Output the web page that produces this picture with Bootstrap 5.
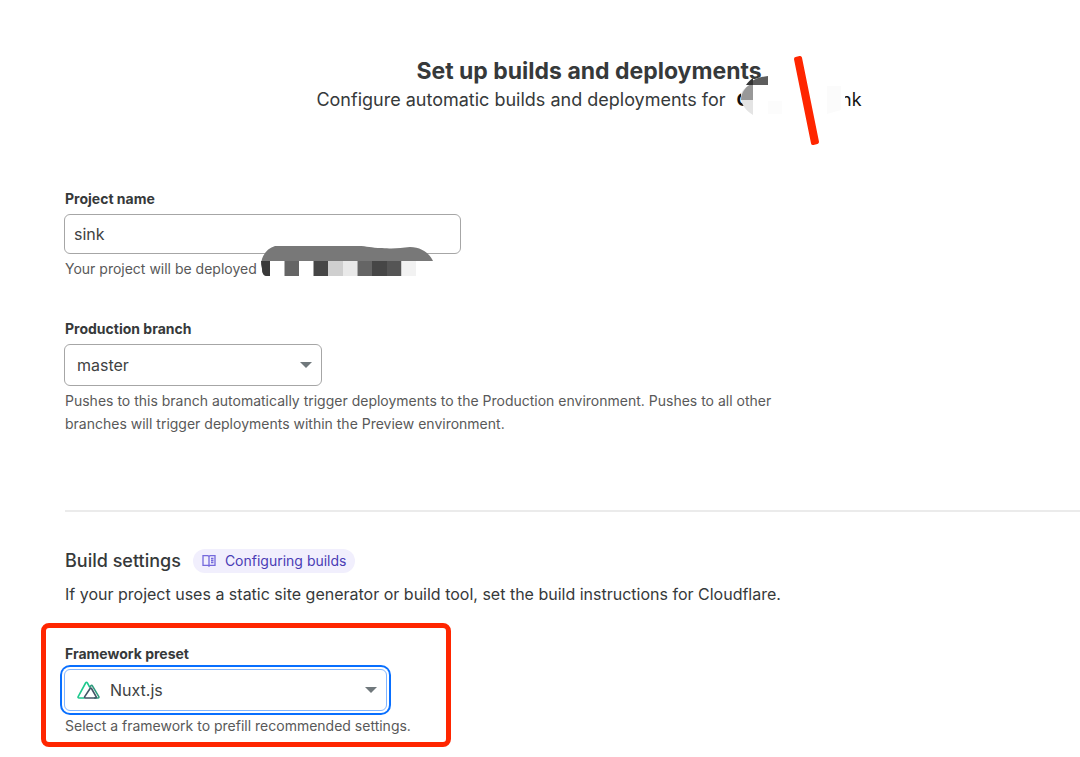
<!DOCTYPE html>
<html lang="en">
<head>
<meta charset="utf-8">
<meta name="viewport" content="width=device-width, initial-scale=1">
<title>Set up builds and deployments</title>
<link href="https://cdn.jsdelivr.net/npm/bootstrap@5.3.0/dist/css/bootstrap.min.css" rel="stylesheet">
<style>
  body { font-family: Inter, "Liberation Sans", sans-serif; font-size: 16px; line-height: 24px; color: #36393a; background: #fff; }
  .setup { padding: 55px 0 19px 65px; }
  .setup-head { padding-left: 33px; margin-bottom: 75px; }
  .setup-title { font-size: 23px; line-height: 32px; font-weight: 700; }
  .setup-sub { font-size: 18px; line-height: 26px; gap: 11px; }
  .repo { width: 125px; color: #111; }
  .repo-mask { left: -1px; top: -33px; }
  .field-group { margin-bottom: 38px; }
  .field-label { font-size: 14px; line-height: 22px; font-weight: 700; }
  .field-help { font-size: 14px; line-height: 23px; color: #595959; max-width: 740px; margin-top: 3px; }
  .field-box { border: 1px solid #a6a6a6; border-radius: 6px; color: #404242; font-size: 16px; line-height: 24px; margin-left: -1px; }
  .field-name { width: 397px; height: 40px; padding: 0 9px; }
  .field-branch { width: 258px; }
  .field-select { height: 42px; padding: 0 40px 0 12px; background: #fff url("data:image/svg+xml,%3Csvg xmlns='http://www.w3.org/2000/svg' viewBox='0 0 12 6'%3E%3Cpath d='M0 0h12L6 6z' fill='%2370787c'/%3E%3C/svg%3E") no-repeat right 9px center / 12px 6px; }
  .field-preset { width: 323px; padding-left: 45px; border-color: #82b6ff; }
  .field-preset, .field-preset:focus { box-shadow: 0 0 0 2px #fff, 0 0 0 4px #086fff; }
  .preset-icon { left: 12px; top: 12px; }
  .name-mask { left: 195px; top: 56px; }
  .divider { border-top: 2px solid #ebebeb; margin: 75px 0 35px; }
  .section-title { font-size: 18px; line-height: 28px; font-weight: 500; }
  .section-head { gap: 12px; margin-bottom: 7px; }
  .section-text { margin-bottom: 37px; }
  .doc-link { font-size: 14px; line-height: 24px; color: #4a3cb5; background: #f1effd; padding: 0 9px; gap: 9px; }
  .callout { left: -24px; top: -20px; width: 410px; height: 124px; border: 5px solid #ff2600; border-radius: 8px; }
</style>
</head>
<body>
<main class="setup">
  <header class="setup-head text-center">
    <h1 class="setup-title mb-0">Set up builds and deployments</h1>
    <p class="setup-sub d-flex justify-content-center mb-0">
      <span>Configure automatic builds and deployments for</span>
      <span class="repo position-relative d-flex justify-content-between"><b>C</b><span>nk</span>
        <svg class="repo-mask position-absolute" width="125" height="92" viewBox="736 54 125 92" aria-hidden="true">
          <path d="M768 76v36h-14C748 110 741 103 741 94C742 86 750 78 768 76z" fill="#fff"/>
          <path d="M753 85v30C746 111 741 104 741 98L741 94C742 90 746 86 753 85z" fill="#e4e4e4"/>
          <path d="M753 83v17H741C741 92 746 86 753 83z" fill="#989898"/>
          <path d="M768 76v9H748C753 79 760 77 768 76z" fill="#5d5d5d"/>
          <path d="M753 78v7H746C748 82 750 80 753 78z" fill="#343434"/>
          <path d="M768 101h14v13h-14z" fill="#fcfcfc"/>
          <path d="M827 86h14v24l-14 4z" fill="#fbfbfb"/>
          <path d="M841 88h4v22h-4z" fill="#fff"/>
          <path d="M796 59L800 58L817 142L813 143z" fill="#ff2600" stroke="#ff2600" stroke-width="4" stroke-linejoin="round"/>
        </svg>
      </span>
    </p>
  </header>

  <form>
    <div class="field-group position-relative">
      <label class="field-label d-block mb-1" for="project">Project name</label>
      <input class="field-box field-name d-block" id="project" type="text" value="sink">
      <div class="field-help">Your project will be deployed</div>
      <svg class="name-mask position-absolute" width="176" height="34" viewBox="260 244 176 34" aria-hidden="true">
        <path d="M261 261h157v15H266q-5-2-5-8z" fill="#fff"/>
        <path d="M261 264C262 254 268 248 275 246H358C368 246 370 248 382 248C394 249 400 248 410 247C422 247 430 254 433 261H270V276H266Q262 275 262 268z" fill="#787878"/>
        <path d="M261 261h9v15h-4q-4-1-4-7z" fill="#393939"/>
        <path d="M284.500 261h14.500v15h-14.500z" fill="#656565"/>
        <path d="M313.500 261h14.500v15h-14.500z" fill="#464646"/>
        <path d="M328 261h15v15h-15z" fill="#cfcfcf"/>
        <path d="M343 261h14.500v15H343z" fill="#e9e9e9"/>
        <path d="M357.500 261H372v15h-14.500z" fill="#656565"/>
        <path d="M372 261h15v15h-15z" fill="#464646"/>
        <path d="M387 261h14.500v15H387z" fill="#555"/>
        <path d="M401.500 261H416v15h-14.500z" fill="#f2f2f2"/>
      </svg>
    </div>

    <div>
      <label class="field-label d-block mb-1" for="branch">Production branch</label>
      <select class="field-box field-select field-branch form-select d-block" id="branch"><option>master</option></select>
      <div class="field-help">Pushes to this branch automatically trigger deployments to the Production environment. Pushes to all other branches will trigger deployments within the Preview environment.</div>
    </div>

    <div class="divider"></div>

    <section>
      <div class="section-head d-flex align-items-center">
        <h2 class="section-title mb-0">Build settings</h2>
        <a class="doc-link d-inline-flex align-items-center rounded-pill text-decoration-none" href="#">
          <svg width="14" height="14" viewBox="0 0 14 14" fill="none" stroke="#7569dc" stroke-width="1.300" aria-hidden="true"><path d="M7 2.500L6 1.700H1v9.600h5l1 .9 1-.9h5V1.700H8zM7 2.500v9.500M9 4.500h2.500M9 6.500h2.500M9 8.500h2.500"/></svg>
          Configuring builds
        </a>
      </div>
      <p class="section-text">If your project uses a static site generator or build tool, set the build instructions for Cloudflare.</p>

      <div class="position-relative">
        <label class="field-label d-block mb-1" for="preset">Framework preset</label>
        <div class="position-relative">
          <select class="field-box field-select field-preset form-select d-block" id="preset"><option>Nuxt.js</option></select>
          <svg class="preset-icon position-absolute pe-none" width="23" height="18" viewBox="0 0 23 18" fill="none" stroke-width="1.600" stroke-linejoin="round" aria-hidden="true">
            <path d="M7.500 17H2q-1.400 0-.8-1.300L8.600 2q.9-1.400 1.800 0l2.400 4.300" stroke="#1fc98e"/>
            <path d="M12.600 6.500L13.900 4.700q.8-1 1.500.2L21.800 15.600q.5 1.400-.8 1.400H17" stroke="#2f9b7d"/>
            <path d="M8.500 17h10q1.200-.2.600-1.300L14.500 7.500q-.7-1.100-1.400 0L7.700 15.600q-.5 1.300.8 1.400z" stroke="#435466"/>
          </svg>
        </div>
        <div class="field-help">Select a framework to prefill recommended settings.</div>
        <div class="callout position-absolute pe-none"></div>
      </div>
    </section>
  </form>
</main>
<script src="https://cdn.jsdelivr.net/npm/bootstrap@5.3.0/dist/js/bootstrap.bundle.min.js"></script>
</body>
</html>
